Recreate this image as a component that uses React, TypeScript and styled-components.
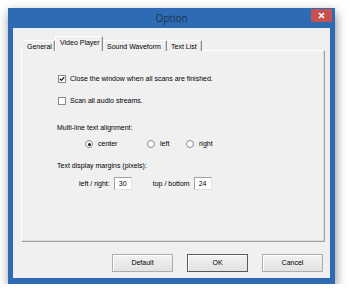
import styled, { createGlobalStyle } from 'styled-components';

const GlobalStyle = createGlobalStyle`
  html, body {
    margin: 0;
    background: #ffffff;
  }
  body {
    font-family: 'Liberation Sans', Arial, sans-serif;
  }
`;

const Page = styled.div`
  padding: 8px 0 0 8px;
`;

const Window = styled.div`
  width: 327px;
  height: 276px;
  background: #2d6cb4;
  box-shadow: 1px 4px 10px rgba(0, 0, 0, 0.45);
  display: flex;
  flex-direction: column;
`;

const TitleBar = styled.div`
  height: 20px;
  display: grid;
  grid-template-columns: 1fr auto 1fr;
  align-items: start;
`;

const Title = styled.div`
  grid-column: 2;
  font-family: 'Open Sans', 'Liberation Sans', sans-serif;
  font-size: 10px;
  line-height: 20px;
  color: #1d3149;
`;

const CloseButton = styled.div`
  justify-self: end;
  margin: 1px 3px 0 0;
  width: 21px;
  height: 13px;
  background: #c75050;
  display: flex;
  align-items: center;
  justify-content: center;
`;

const Client = styled.div`
  flex: 1;
  margin: 0 5px 6px 5px;
  background: #f0f0f0;
  padding: 8px 5px 0 8px;
  display: flex;
  flex-direction: column;
`;

const TabStrip = styled.div`
  display: flex;
  align-items: flex-end;
  height: 15px;
  padding-left: 2px;
  margin-bottom: -1px;
  position: relative;
  z-index: 1;
`;

const Tab = styled.div<{ $w: number; $active?: boolean }>`
  box-sizing: border-box;
  width: ${(p) => p.$w}px;
  height: ${(p) => (p.$active ? 15 : 11)}px;
  padding-left: ${(p) => (p.$active ? 4 : 3)}px;
  font-size: 7px;
  line-height: ${(p) => (p.$active ? 12 : 11)}px;
  color: #000;
  white-space: nowrap;
  background: #f0f0f0;
  border-top: 1px solid #ffffff;
  border-left: 1px solid ${(p) => (p.$active ? '#ffffff' : 'transparent')};
  border-right: 1px solid #8e8e8e;
  box-shadow: inset -1px 0 0 #d4d4d4;
`;

const Panel = styled.div`
  height: 192px;
  box-sizing: border-box;
  border-top: 1px solid #ffffff;
  border-left: 1px solid #ffffff;
  border-right: 1px solid #a0a0a0;
  border-bottom: 1px solid #a0a0a0;
  box-shadow: inset -1px -1px 0 #dcdcdc;
  padding: 23px 0 0 35px;
  display: flex;
  flex-direction: column;
  font-size: 7px;
  color: #000;
`;

const Row = styled.div<{ $mt?: number; $ml?: number }>`
  display: flex;
  align-items: center;
  height: 10px;
  line-height: 10px;
  margin-top: ${(p) => p.$mt ?? 0}px;
  margin-left: ${(p) => p.$ml ?? 0}px;
  white-space: nowrap;
`;

const Box = styled.span`
  box-sizing: border-box;
  width: 8px;
  height: 8px;
  border: 1px solid #8a8a8a;
  background: #ffffff;
  margin-right: 4px;
  display: flex;
  align-items: center;
  justify-content: center;
`;

const RadioGrid = styled.div`
  display: grid;
  grid-template-columns: 62px 39px auto;
  height: 10px;
  margin: 6px 0 0 28px;
`;

const RadioItem = styled.div`
  display: flex;
  align-items: center;
  line-height: 10px;
`;

const Circle = styled.span<{ $on?: boolean }>`
  box-sizing: border-box;
  width: 8px;
  height: 8px;
  border-radius: 50%;
  border: 1px solid #8a8a8a;
  background: #ffffff;
  margin-right: 5px;
  display: flex;
  align-items: center;
  justify-content: center;
  &::after {
    content: '';
    display: ${(p) => (p.$on ? 'block' : 'none')};
    width: 3px;
    height: 3px;
    border-radius: 50%;
    background: #1a1a1a;
  }
`;

const MarginRow = styled.div`
  display: flex;
  align-items: center;
  height: 13px;
  margin: 6px 0 0 22px;
  white-space: nowrap;
`;

const NumberField = styled.div<{ $mr?: number }>`
  box-sizing: border-box;
  width: 18px;
  height: 13px;
  margin-left: 4px;
  margin-right: ${(p) => p.$mr ?? 0}px;
  border-top: 1px solid #a0a0a0;
  border-left: 1px solid #a0a0a0;
  border-right: 1px solid #e3e3e3;
  border-bottom: 1px solid #e3e3e3;
  background: #ffffff;
  padding-left: 4px;
  font-size: 7px;
  line-height: 11px;
`;

const ButtonRow = styled.div`
  display: flex;
  justify-content: flex-end;
  gap: 14px;
  margin-top: 12px;
  padding-right: 2px;
`;

const Button = styled.div<{ $default?: boolean }>`
  box-sizing: border-box;
  width: 61px;
  height: 18px;
  border: 1px solid ${(p) => (p.$default ? '#5a5a5a' : '#adadad')};
  background: linear-gradient(#f2f2f2, #e2e2e2);
  box-shadow: inset 1px 1px 0 #ffffff;
  font-size: 7px;
  line-height: 16px;
  text-align: center;
  color: #000;
`;

function Check() {
  return (
    <svg width="6" height="6" viewBox="0 0 6 6">
      <path d="M0.8 2.8 L2.4 4.4 L5.2 1.2" fill="none" stroke="#222" strokeWidth="1.3" />
    </svg>
  );
}

export default function App() {
  return (
    <Page>
      <GlobalStyle />
      <Window>
        <TitleBar>
          <Title>Option</Title>
          <CloseButton>
            <svg width="7" height="7" viewBox="0 0 7 7">
              <path d="M1 1 L6 6 M6 1 L1 6" stroke="#ffffff" strokeWidth="1.6" />
            </svg>
          </CloseButton>
        </TitleBar>
        <Client>
          <TabStrip>
            <Tab $w={32}>General</Tab>
            <Tab $w={48} $active>Video Player</Tab>
            <Tab $w={64}>Sound Waveform</Tab>
            <Tab $w={35}>Text List</Tab>
          </TabStrip>
          <Panel>
            <Row $ml={1}>
              <Box>
                <Check />
              </Box>
              Close the window when all scans are finished.
            </Row>
            <Row $mt={12} $ml={1}>
              <Box />
              Scan all audio streams.
            </Row>
            <Row $mt={17}>Multi-line text alignment:</Row>
            <RadioGrid>
              <RadioItem>
                <Circle $on />
                center
              </RadioItem>
              <RadioItem>
                <Circle />
                left
              </RadioItem>
              <RadioItem>
                <Circle />
                right
              </RadioItem>
            </RadioGrid>
            <Row $mt={12}>Text display margins (pixels):</Row>
            <MarginRow>
              left / right:
              <NumberField $mr={21}>30</NumberField>
              top / bottom
              <NumberField>24</NumberField>
            </MarginRow>
          </Panel>
          <ButtonRow>
            <Button>Default</Button>
            <Button $default>OK</Button>
            <Button>Cancel</Button>
          </ButtonRow>
        </Client>
      </Window>
    </Page>
  );
}
